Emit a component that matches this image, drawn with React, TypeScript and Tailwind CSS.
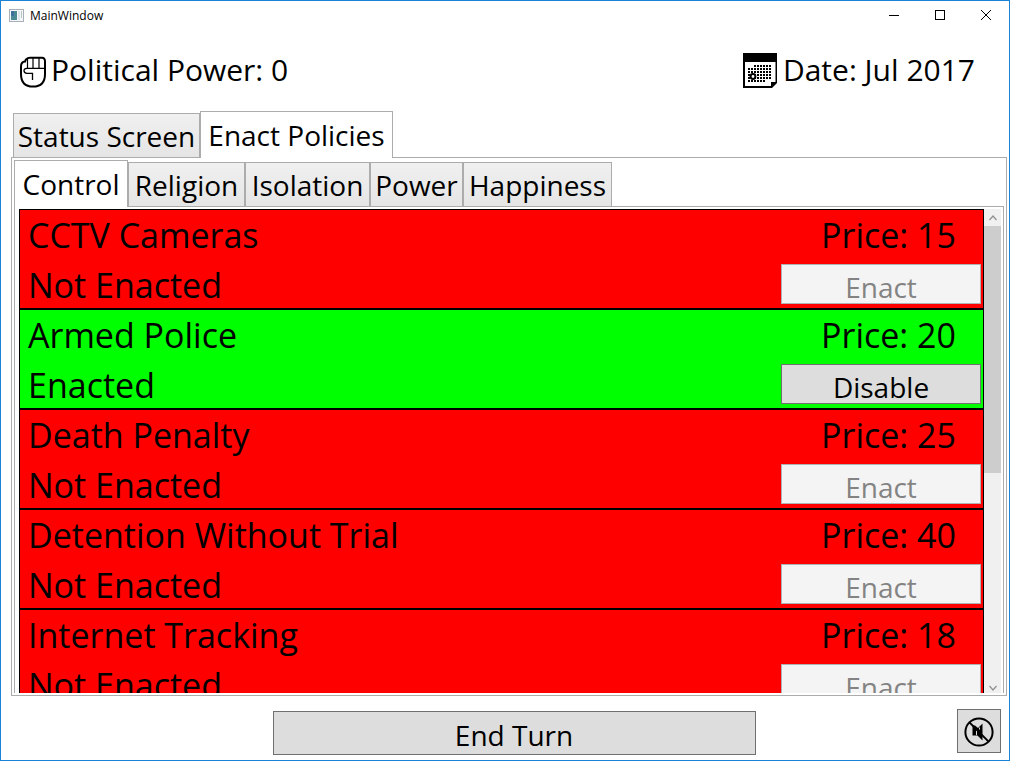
import React, { useState } from "react";

type Policy = { name: string; price: number; enacted: boolean };

const policies: Policy[] = [
  { name: "CCTV Cameras", price: 15, enacted: false },
  { name: "Armed Police", price: 20, enacted: true },
  { name: "Death Penalty", price: 25, enacted: false },
  { name: "Detention Without Trial", price: 40, enacted: false },
  { name: "Internet Tracking", price: 18, enacted: false },
];

const screens = [
  { label: "Status Screen", width: "w-[187px]" },
  { label: "Enact Policies", width: "w-[193px]" },
];

const categories = [
  { label: "Control", width: "w-[114px]" },
  { label: "Religion", width: "w-[117px]" },
  { label: "Isolation", width: "w-[125px]" },
  { label: "Power", width: "w-[93px]" },
  { label: "Happiness", width: "w-[149px]" },
];

function AppIcon() {
  return (
    <svg className="h-[13px] w-[15px]" viewBox="0 0 15 13" shapeRendering="crispEdges" aria-hidden="true">
      <rect x="0.5" y="0.5" width="14" height="12" fill="#f4f6f8" stroke="#a9afb8" />
      <rect x="2" y="2" width="6" height="9" fill="#4b8a94" />
      <rect x="2" y="2" width="3" height="5" fill="#3f6f9b" />
      <rect x="9" y="2" width="2" height="9" fill="#dfe4e8" />
      <rect x="12" y="2" width="1" height="7" fill="#b7c8c4" />
    </svg>
  );
}

function FistIcon() {
  return (
    <svg className="mt-1 h-8 w-7" viewBox="0 0 28 32" fill="none" stroke="#000" aria-hidden="true">
      <path
        d="M7.5 3 Q8.5 1.7 11 1.7 H23 Q26 1.7 26 5.5 V18 Q26 30.6 14 30.6 Q2 30.6 2 18 V10.5 Q2 6 6 5.6 Q6.2 4.2 7.5 3 Z"
        strokeWidth="2"
      />
      <path d="M8.5 3 V12 M14 2 V12 M20 2 V12" strokeWidth="1.2" />
      <path d="M26 12.3 H8 Q5 12.3 5 14.6 Q5 17.4 8 17.4 H13.5 V24" strokeWidth="1.3" />
    </svg>
  );
}

function CalendarIcon() {
  const dots: [number, number][] = [];
  for (let row = 0; row < 6; row++) {
    const first = row === 0 ? 2 : 0;
    const last = row === 5 ? 5 : 7;
    for (let col = first; col <= last; col++) dots.push([col, row]);
  }
  return (
    <svg className="h-[35px] w-[34px]" viewBox="0 0 34 35" aria-hidden="true">
      <path d="M0 0 H34 V30 L29 35 H0 Z" fill="#000" />
      <path d="M2 9 H32.5 V29 H28 V33 H2 Z" fill="#fff" />
      {dots.map(([col, row]) => (
        <rect key={`${col}-${row}`} x={5 + col * 3} y={12 + row * 3} width="2" height="2" fill="#000" />
      ))}
      <circle cx="10" cy="23.5" r="2.4" fill="#fff" stroke="#000" strokeWidth="2" />
    </svg>
  );
}

function MuteIcon() {
  return (
    <svg className="mt-0.5 h-[30px] w-[30px]" viewBox="0 0 30 30" fill="none" stroke="#000" aria-hidden="true">
      <path d="M8.5 8.5 H11 L14 11 L18.5 6.5 V23.5 L13.5 18.5 H8.5 Z" fill="#000" stroke="none" />
      <path d="M12.5 13.5 V18 M15.5 10.5 V12.5" stroke="#ddd" strokeWidth="1" />
      <circle cx="15" cy="15" r="13.6" strokeWidth="2" />
      <path d="M5.4 5.4 L24.6 24.6" strokeWidth="2" />
    </svg>
  );
}

function Chevron({ down = false }: { down?: boolean }) {
  return (
    <svg className="h-2 w-2" viewBox="0 0 8 8" fill="none" stroke="#8f8f8f" strokeWidth="1.2" aria-hidden="true">
      <path d={down ? "M0.5 2 L4 6 L7.5 2" : "M0.5 6 L4 2 L7.5 6"} />
    </svg>
  );
}

function Tab({
  label,
  width,
  active,
  onSelect,
}: {
  label: string;
  width: string;
  active: boolean;
  onSelect: () => void;
}) {
  return (
    <button
      type="button"
      role="tab"
      aria-selected={active}
      onClick={onSelect}
      className={`${width} shrink-0 whitespace-nowrap border border-b-0 border-[#acacac] text-[28px] leading-[44px] ${
        active
          ? "z-10 -mb-px h-[47px] bg-white"
          : "h-11 bg-linear-to-b from-[#f0f0f0] to-[#e5e5e5]"
      }`}
    >
      {label}
    </button>
  );
}

function PolicyRow({ policy }: { policy: Policy }) {
  return (
    <li
      className={`flex h-[100px] shrink-0 justify-between border border-black pr-0.5 pl-2 ${
        policy.enacted ? "bg-[#00ff00]" : "bg-[#ff0000]"
      }`}
    >
      <div className="text-[34px]">
        <h2 className="leading-[50px]">{policy.name}</h2>
        <p className="leading-[50px]">{policy.enacted ? "Enacted" : "Not Enacted"}</p>
      </div>
      <div className="flex w-[200px] flex-col">
        <p className="pr-[25px] text-right text-[34px] leading-[50px]">Price: {policy.price}</p>
        <button
          type="button"
          disabled={!policy.enacted}
          className="mt-1 h-10 border border-[#707070] bg-[#dddddd] pt-1 text-[28px] leading-[36px] disabled:border-[#adb2b5] disabled:bg-[#f4f4f4] disabled:text-[#838383]"
        >
          {policy.enacted ? "Disable" : "Enact"}
        </button>
      </div>
    </li>
  );
}

export default function App() {
  const [screen, setScreen] = useState("Enact Policies");
  const [category, setCategory] = useState("Control");

  return (
    <div className="flex h-screen flex-col border border-[#1883d7] bg-white font-['Open_Sans','Noto_Sans',sans-serif] text-black">
      <header className="flex h-7 shrink-0 items-center pl-2">
        <AppIcon />
        <span className="ml-1.5 flex-1 pt-0.5 text-[12px]">MainWindow</span>
        <button type="button" aria-label="Minimize" className="flex h-full w-[46px] items-center justify-center">
          <svg className="h-[10px] w-[10px]" viewBox="0 0 10 10" stroke="#000" aria-hidden="true">
            <path d="M0 5.5 H10" />
          </svg>
        </button>
        <button type="button" aria-label="Maximize" className="flex h-full w-[46px] items-center justify-center">
          <svg className="h-[10px] w-[10px]" viewBox="0 0 10 10" fill="none" stroke="#000" aria-hidden="true">
            <rect x="0.5" y="0.5" width="9" height="9" />
          </svg>
        </button>
        <button type="button" aria-label="Close" className="flex h-full w-[46px] items-center justify-center">
          <svg className="h-[10px] w-[10px]" viewBox="0 0 10 10" stroke="#000" aria-hidden="true">
            <path d="M0 0 L10 10 M10 0 L0 10" />
          </svg>
        </button>
      </header>

      <div className="flex h-[82px] shrink-0 items-center justify-between pr-[34px] pl-[18px] text-[30px] leading-10">
        <div className="flex items-center gap-1">
          <FistIcon />
          <span>Political Power: 0</span>
        </div>
        <div className="flex items-center gap-1.5">
          <CalendarIcon />
          <span>Date: Jul 2017</span>
        </div>
      </div>

      <main className="flex min-h-0 flex-1 flex-col pr-0.5 pl-2.5">
        <div role="tablist" className="flex items-end pl-0.5">
          {screens.map((tab) => (
            <Tab
              key={tab.label}
              label={tab.label}
              width={tab.width}
              active={screen === tab.label}
              onSelect={() => setScreen(tab.label)}
            />
          ))}
        </div>
        <section className="flex min-h-0 flex-1 flex-col border border-[#acacac] p-0.5">
          <div role="tablist" className="flex items-end">
            {categories.map((tab) => (
              <Tab
                key={tab.label}
                label={tab.label}
                width={tab.width}
                active={category === tab.label}
                onSelect={() => setCategory(tab.label)}
              />
            ))}
          </div>
          <div className="flex min-h-0 flex-1 border border-b-0 border-[#acacac] pt-0.5 pr-0.5 pl-1">
            <ul className="flex min-w-0 flex-1 flex-col overflow-hidden">
              {policies.map((policy) => (
                <PolicyRow key={policy.name} policy={policy} />
              ))}
            </ul>
            <div className="flex w-[17px] flex-col bg-[#f0f0f0]">
              <button type="button" aria-label="Scroll up" className="flex h-[17px] items-center justify-center">
                <Chevron />
              </button>
              <div className="flex-1">
                <div className="h-[54%] bg-[#cdcdcd]" />
              </div>
              <button type="button" aria-label="Scroll down" className="flex h-2.5 items-center justify-center">
                <Chevron down />
              </button>
            </div>
          </div>
        </section>
      </main>

      <footer className="grid h-16 shrink-0 grid-cols-[1fr_483px_1fr] pr-2 pl-[26px]">
        <button
          type="button"
          className="col-start-2 mt-[15px] h-11 border border-[#707070] bg-[#dddddd] pt-1 text-[28px] leading-[36px]"
        >
          End Turn
        </button>
        <button
          type="button"
          aria-label="Mute"
          className="mt-[13px] flex h-11 w-11 items-center justify-center justify-self-end border border-[#707070] bg-[#dddddd]"
        >
          <MuteIcon />
        </button>
      </footer>
    </div>
  );
}
